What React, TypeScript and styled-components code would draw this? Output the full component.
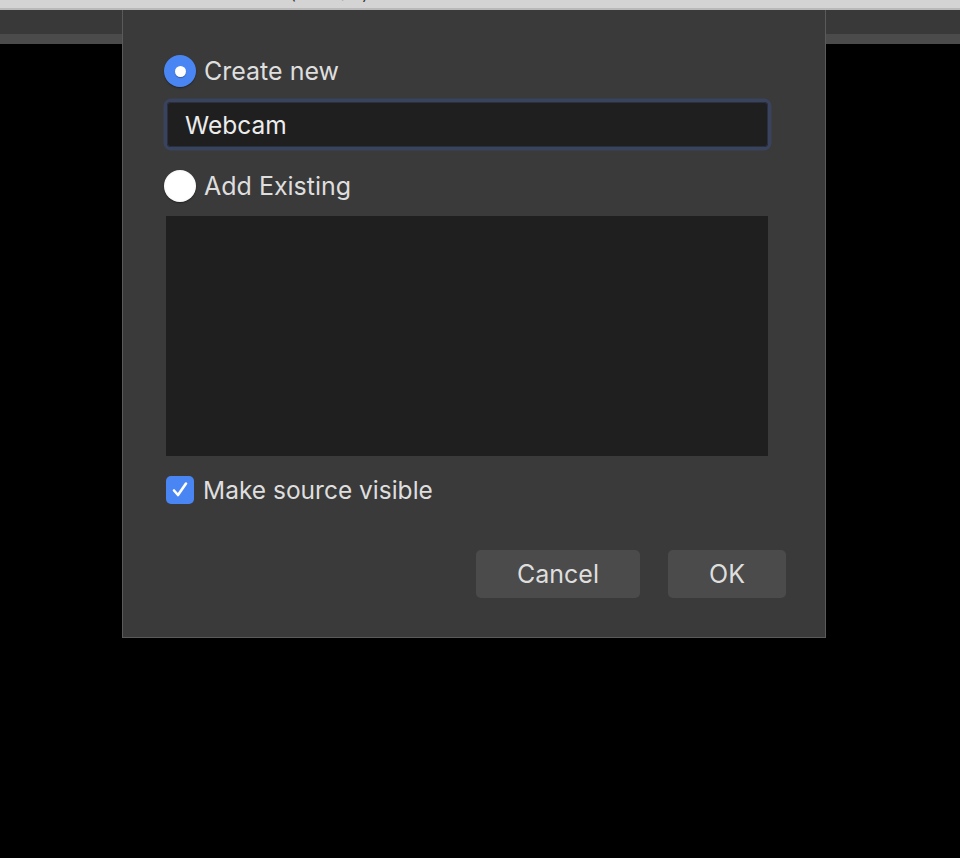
import React from "react";
import styled, { createGlobalStyle } from "styled-components";

const Global = createGlobalStyle`
  html, body { margin: 0; padding: 0; background: #000; }
  body { font-family: Inter, "Noto Sans", "Liberation Sans", sans-serif; }
  * { box-sizing: border-box; }
`;

const Page = styled.div`
  width: 960px;
  height: 858px;
  display: flex;
  flex-direction: column;
  background: #000;
  overflow: hidden;
`;

const TitleBar = styled.div`
  height: 10px;
  flex: none;
  background: #d4d4d4;
  border-bottom: 2px solid #b9b9b9;
  overflow: hidden;
  display: flex;
  justify-content: flex-start;
  padding-left: 290px;
`;

const TitleText = styled.span`
  font-size: 16px;
  line-height: 16px;
  margin-top: -14px;
  color: #333;
`;

const Workspace = styled.div`
  position: relative;
  flex: 1;
  display: flex;
  flex-direction: column;
`;

const Toolbar = styled.div`
  height: 24px;
  flex: none;
  background: #393939;
`;

const SubStrip = styled.div`
  height: 10px;
  flex: none;
  background: #4b4b4b;
`;

const Canvas = styled.div`
  flex: 1;
  background: #000;
`;

const Dialog = styled.div`
  position: absolute;
  left: 122px;
  top: 0;
  width: 704px;
  height: 628px;
  background: #3a3a3a;
  border: 1px solid #5a5a5a;
  border-top: none;
  padding: 45px 57px 0 43px;
  display: flex;
  flex-direction: column;
  color: #dedede;
`;

const OptionRow = styled.label<{ $mt?: number }>`
  display: flex;
  align-items: center;
  gap: 8px;
  height: 32px;
  margin-top: ${(p) => p.$mt ?? 0}px;
  margin-left: -2px;
  font-size: 25px;
`;

const Radio = styled.span<{ $checked?: boolean }>`
  width: 32px;
  height: 32px;
  border-radius: 50%;
  flex: none;
  display: flex;
  align-items: center;
  justify-content: center;
  background: ${(p) =>
    p.$checked ? "#4a86f3" : "radial-gradient(circle, #ffffff 60%, #e6e6e6 100%)"};
  box-shadow: 0 1px 1.5px rgba(0, 0, 0, 0.4);
  &::after {
    content: "";
    display: ${(p) => (p.$checked ? "block" : "none")};
    width: 11px;
    height: 11px;
    border-radius: 50%;
    background: #fff;
    box-shadow: 0 1px 1px rgba(0, 0, 0, 0.3);
  }
`;

const NameInput = styled.div`
  margin-top: 15px;
  margin-left: 1px;
  height: 45px;
  border-radius: 4px;
  background: #1f1f1f;
  box-shadow: inset 0 0 0 1px #2a3040, 0 0 0 3.5px #39435d;
  display: flex;
  align-items: center;
  padding-left: 18px;
  font-size: 24.5px;
  color: #ececec;
`;

const ListBox = styled.div`
  margin-top: 14px;
  height: 240px;
  background: #1f1f1f;
`;

const CheckRow = styled.label`
  margin-top: 20px;
  display: flex;
  align-items: center;
  gap: 9px;
  height: 28px;
  font-size: 24.5px;
`;

const CheckBox = styled.span`
  width: 28px;
  height: 28px;
  border-radius: 5px;
  background: #4a86f3;
  flex: none;
  display: flex;
  align-items: center;
  justify-content: center;
`;

const Footer = styled.div`
  margin-top: 46px;
  margin-right: -18px;
  display: flex;
  justify-content: flex-end;
  gap: 28px;
`;

const Button = styled.button<{ $w: number }>`
  width: ${(p) => p.$w}px;
  height: 48px;
  border: none;
  border-radius: 5px;
  background: #4b4b4b;
  color: #dedede;
  font-family: inherit;
  font-size: 25px;
  padding: 0;
`;

export default function App() {
  return (
    <>
      <Global />
      <Page>
        <TitleBar>
          <TitleText>(Webcam)</TitleText>
        </TitleBar>
        <Workspace>
          <Toolbar />
          <SubStrip />
          <Canvas />
          <Dialog>
            <OptionRow>
              <Radio $checked />
              Create new
            </OptionRow>
            <NameInput>Webcam</NameInput>
            <OptionRow $mt={23}>
              <Radio />
              Add Existing
            </OptionRow>
            <ListBox />
            <CheckRow>
              <CheckBox>
                <svg width="22" height="22" viewBox="0 0 22 22">
                  <path
                    d="M5 11.5 L9 16 L17 4.5"
                    fill="none"
                    stroke="#fff"
                    strokeWidth="2.6"
                    strokeLinecap="round"
                    strokeLinejoin="round"
                  />
                </svg>
              </CheckBox>
              Make source visible
            </CheckRow>
            <Footer>
              <Button $w={164}>Cancel</Button>
              <Button $w={118}>OK</Button>
            </Footer>
          </Dialog>
        </Workspace>
      </Page>
    </>
  );
}
